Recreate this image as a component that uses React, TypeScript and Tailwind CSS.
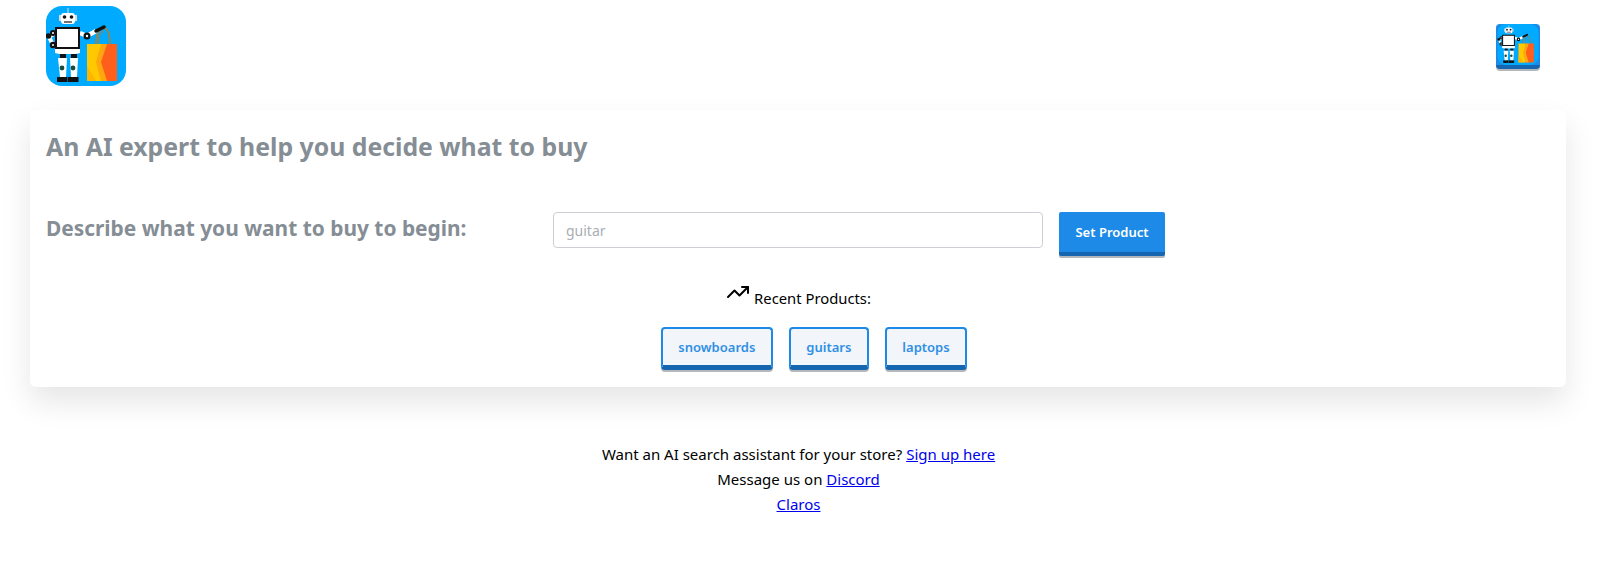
import { TrendingUp } from "lucide-react";

function RobotLogo({ className }: { className: string }) {
  return (
    <svg viewBox="0 0 80 80" className={className}>
      <rect width="80" height="80" rx="16" fill="#00aaff" />
      {/* bag */}
      <rect x="41" y="38" width="14" height="37" fill="#ffc800" />
      <rect x="55" y="38" width="16" height="37" fill="#ff5f1a" />
      <path d="M55 38 L61 38 L55 56 L61 75 L55 75 L50 56 Z" fill="#ffa70f" />
      <path d="M41 60 L50 75 L41 75 Z" fill="#ffb400" />
      {/* bag handles */}
      <path d="M50 38 C50 27 55 21 59 22 C63 24 64 31 64 38" fill="none" stroke="#a8803a" strokeWidth="1.6" />
      <path d="M52 38 C53 30 55 26 58 25" fill="none" stroke="#a8803a" strokeWidth="1" />
      {/* right arm */}
      <path d="M34 27 L41 30 L50 25" fill="none" stroke="#fff" strokeWidth="4.5" />
      <circle cx="41" cy="30" r="3.5" fill="#111" />
      <circle cx="41" cy="30" r="1.2" fill="#fff" />
      <path d="M50 25 L58 21" stroke="#111" strokeWidth="3.5" strokeLinecap="round" />
      {/* left arm */}
      <path d="M9 27 L3 31 L7 39 L12 41" fill="none" stroke="#fff" strokeWidth="4" />
      <circle cx="7" cy="27" r="3" fill="#111" />
      <circle cx="2.5" cy="30" r="2.8" fill="#111" />
      <circle cx="7" cy="39" r="3.2" fill="#111" />
      <circle cx="7" cy="27" r="1" fill="#fff" />
      <circle cx="7" cy="39" r="1" fill="#fff" />
      {/* head */}
      <rect x="15" y="7" width="14" height="11" rx="3" fill="#fff" />
      <rect x="13" y="9" width="2" height="6" fill="#ddd" />
      <rect x="29" y="9" width="2" height="6" fill="#ddd" />
      <path d="M22 2 V7" stroke="#ddd" strokeWidth="1" />
      <circle cx="18.5" cy="11" r="1.8" fill="#111" />
      <circle cx="25.5" cy="11" r="1.8" fill="#111" />
      <path d="M18 16 H26" stroke="#444" strokeWidth="1.5" />
      {/* torso */}
      <rect x="9" y="21" width="25" height="23" fill="#111" />
      <rect x="11" y="23" width="21" height="18" fill="#fff" />
      <path d="M9 43 H34 V47 L30 48 H13 L9 47 Z" fill="#fff" />
      {/* legs */}
      <rect x="14" y="48" width="6" height="4" fill="#111" />
      <rect x="25" y="48" width="6" height="4" fill="#111" />
      <path d="M12 52 H21 L20 71 H14 Z" fill="#fff" />
      <path d="M24 52 H32 L31 71 H25 Z" fill="#fff" />
      <circle cx="16" cy="62" r="2.4" fill="#1a4d3a" />
      <circle cx="27" cy="62" r="2.4" fill="#1a4d3a" />
      <rect x="11" y="71" width="10.5" height="5" fill="#111" />
      <rect x="22" y="71" width="10.5" height="5" fill="#111" />
    </svg>
  );
}

const products = ["snowboards", "guitars", "laptops"];

export default function App() {
  return (
    <div className="min-h-screen bg-white text-black font-['Noto_Sans','Open_Sans',sans-serif] text-[15px]">
      {/* HEADER */}
      <header className="flex items-start justify-between pl-[46px] pr-[62px] pt-[6px] h-[92px]">
        <RobotLogo className="w-[80px] h-[80px]" />
        <button className="w-[44px] h-[45px] rounded-[4px] bg-[#1c8ae6] border-b-[4px] border-[#1565b0] shadow-[0_2px_0_#b4b7bb] overflow-hidden mt-[18px]">
          <RobotLogo className="w-[44px] h-[41px]" />
        </button>
      </header>

      {/* CARD */}
      <main className="ml-[30px] mr-[36px] mt-[18px] h-[277px] rounded-[6px] bg-white pl-[16px] pt-[20px] shadow-[0_15px_30px_rgba(0,0,0,0.1)]">
        <h1 className="text-[24.8px] leading-[32px] font-bold text-[#858d95]">
          An AI expert to help you decide what to buy
        </h1>

        <div className="flex items-start mt-[50px]">
          <label className="w-[507px] pt-[1px] text-[20.9px] leading-[30px] font-bold text-[#858d95]">
            Describe what you want to buy to begin:
          </label>
          <input
            placeholder="guitar"
            className="w-[490px] h-[36px] rounded-[4px] border border-[#ccd0d5] px-[12px] text-[14px] outline-none placeholder:text-[#a9aeb3]"
          />
          <button className="ml-[16px] w-[106px] h-[44px] pt-[1px] bg-[#1c8ae6] border-b-[4px] border-[#1565b0] shadow-[0_2px_0_#b4b7bb] text-white text-[13px] font-semibold rounded-[2px]">
            Set Product
          </button>
        </div>

        <div className="flex justify-center items-end gap-[4px] mt-[25px] pr-[15px] h-[30px]">
          <TrendingUp className="w-[24px] h-[24px] mb-[7px] text-black" strokeWidth={2} />
          <span className="leading-[24px] mb-[1px] text-[14.8px]">Recent Products:</span>
        </div>

        <div className="flex justify-center gap-[16px] mt-[16px] pl-[16px]">
          {products.map((p) => (
            <button
              key={p}
              className="h-[43px] pt-[1px] px-[15.5px] rounded-[4px] bg-[#f2f5f9] border-2 border-[#1c8ae6] border-b-[5px] border-b-[#1565b0] shadow-[0_2px_0_#b4b7bb] text-[#2f8fe6] text-[13px] font-semibold"
            >
              {p}
            </button>
          ))}
        </div>
      </main>

      {/* FOOTER */}
      <footer className="mt-[55px] pr-[5px] text-center leading-[25px]">
        <div>
          Want an AI search assistant for your store?{" "}
          <a href="#" className="text-[#0000ee] underline">Sign up here</a>
        </div>
        <div>
          Message us on <a href="#" className="text-[#0000ee] underline">Discord</a>
        </div>
        <div>
          <a href="#" className="text-[#0000ee] underline">Claros</a>
        </div>
      </footer>
    </div>
  );
}
